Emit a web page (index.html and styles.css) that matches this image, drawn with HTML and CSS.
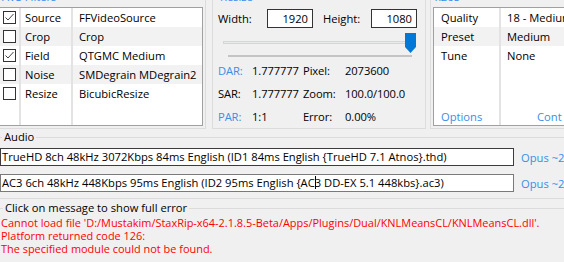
FILE: index.html
```html
<!DOCTYPE html>
<html lang="en">
<head>
    <meta charset="UTF-8">
    <meta name="viewport" content="width=device-width, initial-scale=1.0">
    <title>StaxRip</title>
    <link rel="stylesheet" href="styles.css">
</head>
<body>

    <div class="top">
        <fieldset class="group filters">
            <legend>AVS Filters</legend>
            <div class="list">
                <div class="row">
                    <span class="cell cell-check"><span class="box"><svg width="11" height="11" viewBox="0 0 11 11"><polyline points="1.5,5.5 4,8 9.5,2" fill="none" stroke="#444" stroke-width="1"/></svg></span></span>
                    <span class="cell cell-cat">Source</span>
                    <span class="cell cell-name">FFVideoSource</span>
                </div>
                <div class="row alt">
                    <span class="cell cell-check"><span class="box"></span></span>
                    <span class="cell cell-cat">Crop</span>
                    <span class="cell cell-name">Crop</span>
                </div>
                <div class="row">
                    <span class="cell cell-check"><span class="box"><svg width="11" height="11" viewBox="0 0 11 11"><polyline points="1.5,5.5 4,8 9.5,2" fill="none" stroke="#444" stroke-width="1"/></svg></span></span>
                    <span class="cell cell-cat">Field</span>
                    <span class="cell cell-name">QTGMC Medium</span>
                </div>
                <div class="row alt">
                    <span class="cell cell-check"><span class="box"></span></span>
                    <span class="cell cell-cat">Noise</span>
                    <span class="cell cell-name">SMDegrain MDegrain2</span>
                </div>
                <div class="row">
                    <span class="cell cell-check"><span class="box"></span></span>
                    <span class="cell cell-cat">Resize</span>
                    <span class="cell cell-name">BicubicResize</span>
                </div>
                <div class="row fill">
                    <span class="cell cell-check"></span>
                    <span class="cell cell-cat"></span>
                    <span class="cell cell-name"></span>
                </div>
            </div>
        </fieldset>

        <fieldset class="group resize">
            <legend>Resize</legend>
            <div class="size-row">
                <span class="size-label">Width:</span>
                <input class="num" type="text" value="1920">
                <span class="size-label second">Height:</span>
                <input class="num" type="text" value="1080">
            </div>
            <svg class="slider" width="200" height="24" viewBox="0 0 200 24">
                <rect x="5.5" y="8.5" width="186" height="2" fill="#e7eaea" stroke="#d6d6d6"/>
                <rect x="10" y="22" width="184" height="2" fill="#c4c4c4"/>
                <polygon points="187,0 198,0 198,14 192.5,20 187,14" fill="#0078d7"/>
            </svg>
            <div class="info">
                <span class="blue">DAR:</span><span>1.777777</span><span>Pixel:</span><span>2073600</span>
                <span>SAR:</span><span>1.777777</span><span>Zoom:</span><span>100.0/100.0</span>
                <span class="blue">PAR:</span><span>1:1</span><span>Error:</span><span>0.00%</span>
            </div>
        </fieldset>

        <fieldset class="group encoder">
            <legend>x265</legend>
            <div class="list">
                <div class="row">
                    <span class="cell cell-key">Quality</span>
                    <span class="cell cell-value">18 - Medium</span>
                </div>
                <div class="row alt">
                    <span class="cell cell-key">Preset</span>
                    <span class="cell cell-value">Medium</span>
                </div>
                <div class="row">
                    <span class="cell cell-key">Tune</span>
                    <span class="cell cell-value">None</span>
                </div>
                <div class="row fill">
                    <span class="cell cell-key"></span>
                    <span class="cell cell-value"></span>
                </div>
                <div class="row links">
                    <span class="cell cell-key blue">Options</span>
                    <span class="cell cell-value blue more">Cont</span>
                </div>
            </div>
        </fieldset>
    </div>

    <fieldset class="group audio">
        <legend>Audio</legend>
        <div class="audio-row">
            <div class="textbox dark">TrueHD 8ch 48kHz 3072Kbps 84ms English (ID1 84ms English {TrueHD 7.1 Atnos}.thd)</div>
            <span class="blue codec">Opus ~2</span>
        </div>
        <div class="audio-row">
            <div class="textbox">AC3 6ch 48kHz 448Kbps 95ms English (ID2 95ms English {AC<span class="caret"></span>3 DD-EX 5.1 448kbs}.ac3)</div>
            <span class="blue codec">Opus ~2</span>
        </div>
    </fieldset>

    <fieldset class="group errors">
        <legend>Click on message to show full error</legend>
        <div class="error-text">
            <div>Cannot load file 'D:/Mustakim/StaxRip-x64-2.1.8.5-Beta/Apps/Plugins/Dual/KNLMeansCL/KNLMeansCL.dll'.</div>
            <div>Platform returned code 126:</div>
            <div>The specified module could not be found.</div>
        </div>
    </fieldset>

</body>
</html>
```

FILE: styles.css
```css
* {
    box-sizing: border-box;
}
body {
    margin: 0;
    width: 564px;
    height: 262px;
    overflow: hidden;
    background-color: #f0f0f0;
    font-family: "Open Sans", "Noto Sans", sans-serif;
    font-size: 11.2px;
    color: #000;
}
.blue {
    color: #3a8ee6;
}

/* group boxes */
.group {
    margin: 0;
    padding: 0;
    min-width: 0;
    border: 1px solid #dcdcdc;
}
.group legend {
    padding: 0 2px;
    line-height: 16px;
    color: #3a8ee6;
    white-space: nowrap;
}
.top {
    display: flex;
    margin-top: -11px;
}
.filters {
    flex: none;
    width: 206px;
    padding: 2px 2px 2px 0;
    border-left: none;
}
.resize {
    flex: none;
    width: 214px;
    margin-left: 6px;
    padding: 4px 0 0 5px;
}
.encoder {
    flex: 1;
    margin-left: 4px;
    padding: 2px 0 2px 2px;
    border-right: none;
}

/* list views */
.list {
    height: 119px;
    display: flex;
    flex-direction: column;
    background-color: #fff;
    border: 1px solid #a0a0a0;
}
.filters .list {
    border-left: none;
}
.encoder .list {
    border-right: none;
}
.row {
    display: flex;
    height: 19px;
    flex: none;
}
.row.alt {
    background-color: #f2f2f2;
}
.row.fill {
    flex: 1;
}
.row.links {
    height: 18px;
}
.cell {
    display: flex;
    align-items: center;
    white-space: nowrap;
    overflow: hidden;
}
.cell-check {
    width: 21px;
    padding-left: 3px;
    border-right: 2px solid #e3e3e3;
}
.cell-cat {
    width: 52px;
    padding-left: 4px;
    border-right: 2px solid #e3e3e3;
}
.cell-name {
    flex: 1;
    padding-left: 6px;
}
.cell-key {
    width: 67px;
    padding-left: 7px;
    border-right: 2px solid #e3e3e3;
}
.cell-value {
    flex: 1;
    padding-left: 6px;
}
.cell-value.more {
    padding-left: 36px;
}
.box {
    width: 13px;
    height: 13px;
    border: 1px solid #333;
    background-color: #fff;
}
.box svg {
    display: block;
}

/* resize */
.size-row {
    display: flex;
    align-items: center;
    height: 19px;
}
.size-label {
    width: 49px;
}
.size-label.second {
    width: 48px;
    margin-left: 10px;
}
.num {
    width: 46px;
    height: 19px;
    padding: 0 4px;
    border: 1px solid #333;
    font: inherit;
    text-align: right;
    background-color: #fff;
}
.slider {
    display: block;
    margin-top: 5px;
}
.info {
    display: grid;
    grid-template-columns: 34px 51px 42px 1fr;
    grid-auto-rows: 23px;
    align-items: center;
    margin-top: 2px;
    letter-spacing: -0.1px;
}

/* audio */
.audio {
    padding: 3px 0 6px 0;
    border-left: none;
    border-right: none;
}
.audio legend,
.errors legend {
    color: #000;
    margin-left: 2px;
}
.audio-row {
    display: flex;
    align-items: center;
}
.audio-row + .audio-row {
    margin-top: 8px;
}
.textbox {
    flex: none;
    width: 514px;
    height: 18px;
    padding: 0 1px;
    line-height: 16px;
    border: 1px solid #7a7a7a;
    background-color: #fff;
    white-space: nowrap;
    overflow: hidden;
}
.textbox.dark {
    border-color: #3c3c3c;
}
.caret {
    display: inline-block;
    width: 1px;
    height: 13px;
    margin-right: -1px;
    background-color: #000;
    vertical-align: -2px;
}
.codec {
    margin-left: 7px;
    white-space: nowrap;
}

/* errors */
.errors {
    margin-top: 1px;
    padding: 0;
    border-left: none;
    border-right: none;
    border-bottom: none;
}
.errors legend {
    margin-left: 3px;
}
.error-text {
    color: #f00;
    font-size: 10.95px;
    line-height: 13px;
    padding-left: 1px;
    white-space: nowrap;
}
```
